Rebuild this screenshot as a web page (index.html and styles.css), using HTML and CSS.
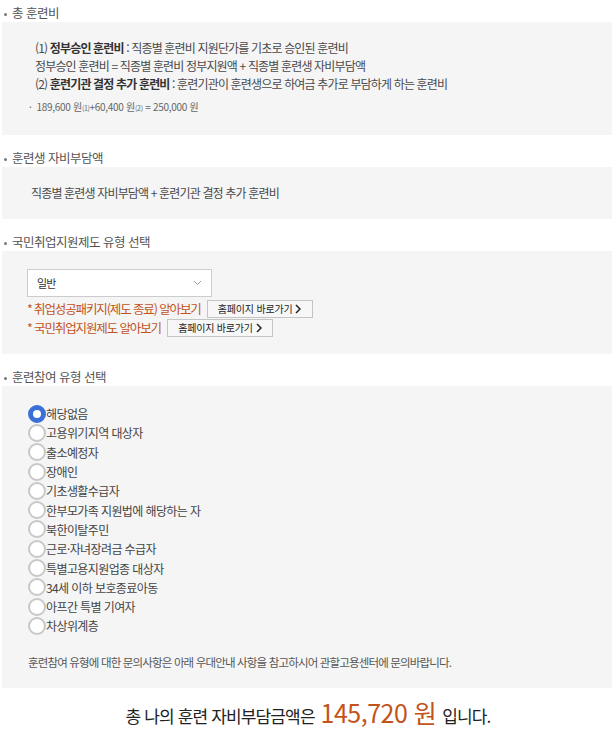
FILE: index.html
```html
<!DOCTYPE html>
<html lang="ko">
<head>
    <meta charset="UTF-8">
    <meta name="viewport" content="width=device-width, initial-scale=1.0">
    <title>훈련비 계산</title>
    <link rel="stylesheet" href="styles.css">
</head>
<body>
    <div class="section">
        <div class="sec-title">총 훈련비</div>
        <div class="box box-total">
            <p>(1) <b>정부승인 훈련비</b> : 직종별 훈련비 지원단가를 기초로 승인된 훈련비</p>
            <p>정부승인 훈련비 = 직종별 훈련비 정부지원액 + 직종별 훈련생 자비부담액</p>
            <p>(2) <b>훈련기관 결정 추가 훈련비</b> : 훈련기관이 훈련생으로 하여금 추가로 부담하게 하는 훈련비</p>
            <p class="calc">·&nbsp; 189,600 원<small>(1)</small>+60,400 원<small>(2)</small> = 250,000 원</p>
        </div>
    </div>

    <div class="section">
        <div class="sec-title">훈련생 자비부담액</div>
        <div class="box box-self">
            <p>직종별 훈련생 자비부담액 + 훈련기관 결정 추가 훈련비</p>
        </div>
    </div>

    <div class="section">
        <div class="sec-title">국민취업지원제도 유형 선택</div>
        <div class="box box-type">
            <div class="select">
                <span>일반</span>
                <svg width="9" height="6" viewBox="0 0 9 6"><path d="M1 1l3.5 3.5L8 1" fill="none" stroke="#999" stroke-width="1"/></svg>
            </div>
            <div class="link-row first">
                <span class="red">* 취업성공패키지(제도 종료) 알아보기</span>
                <button class="go-btn">홈페이지 바로가기 <svg width="6" height="10" viewBox="0 0 6 10"><path d="M1 1l4 4L1 9" fill="none" stroke="#222" stroke-width="1.5"/></svg></button>
            </div>
            <div class="link-row">
                <span class="red">* 국민취업지원제도 알아보기</span>
                <button class="go-btn">홈페이지 바로가기 <svg width="6" height="10" viewBox="0 0 6 10"><path d="M1 1l4 4L1 9" fill="none" stroke="#222" stroke-width="1.5"/></svg></button>
            </div>
        </div>
    </div>

    <div class="section section-last">
        <div class="sec-title">훈련참여 유형 선택</div>
        <div class="box box-radio">
            <ul class="radio-list">
                <li><label><input type="radio" name="ptype" checked>해당없음</label></li>
                <li><label><input type="radio" name="ptype">고용위기지역 대상자</label></li>
                <li><label><input type="radio" name="ptype">출소예정자</label></li>
                <li><label><input type="radio" name="ptype">장애인</label></li>
                <li><label><input type="radio" name="ptype">기초생활수급자</label></li>
                <li><label><input type="radio" name="ptype">한부모가족 지원법에 해당하는 자</label></li>
                <li><label><input type="radio" name="ptype">북한이탈주민</label></li>
                <li><label><input type="radio" name="ptype">근로·자녀장려금 수급자</label></li>
                <li><label><input type="radio" name="ptype">특별고용지원업종 대상자</label></li>
                <li><label><input type="radio" name="ptype">34세 이하 보호종료아동</label></li>
                <li><label><input type="radio" name="ptype">아프간 특별 기여자</label></li>
                <li><label><input type="radio" name="ptype">차상위계층</label></li>
            </ul>
            <p class="note">훈련참여 유형에 대한 문의사항은 아래 우대안내 사항을 참고하시어 관할고용센터에 문의바랍니다.</p>
        </div>
    </div>

    <div class="result">총 나의 훈련 자비부담금액은 <strong>145,720 원</strong> 입니다.</div>
</body>
</html>
```

FILE: styles.css
```css
body {
    margin: 0;
    padding: 0;
    background: #fff;
    color: #4a4a4a;
    font-family: "Noto Sans CJK KR", "Noto Sans", sans-serif;
    font-size: 12px;
    letter-spacing: -0.07em;
}

p {
    margin: 0;
}

.section {
    margin-bottom: 14px;
}

.section-last {
    margin-bottom: 0;
}

.sec-title {
    position: relative;
    height: 18px;
    line-height: 18px;
    margin-top: 4px;
    padding-left: 12px;
    font-size: 12.5px;
    letter-spacing: -0.04em;
    color: #555;
}

.sec-title::before {
    content: "";
    position: absolute;
    left: 4px;
    top: 9px;
    width: 3px;
    height: 3px;
    border-radius: 50%;
    background: #777;
}

.box {
    margin: 0 4px 0 2px;
    background: #f5f5f5;
}

.box-total {
    padding: 17px 28px 19px 33px;
}

.box-total p {
    line-height: 18px;
}

.box-total b {
    color: #333;
}

.box-total .calc {
    margin: 6px 0 0 -6px;
    line-height: 16px;
    font-size: 10px;
    letter-spacing: -0.03em;
    color: #666;
}

.box-total .calc small {
    font-size: 7px;
}

.box-self {
    padding: 17px 28px 17px 29px;
    line-height: 18px;
}

.box-type {
    padding: 18px 25px 17px;
}

.select {
    display: flex;
    align-items: center;
    justify-content: space-between;
    box-sizing: border-box;
    width: 185px;
    height: 28px;
    padding: 0 9px;
    background: #fff;
    border: 1px solid #ccc;
    color: #333;
    font-size: 11px;
}

.link-row {
    display: flex;
    align-items: center;
    gap: 6px;
    height: 19px;
}

.link-row.first {
    margin-top: 2px;
}

.red {
    color: #c2541b;
    font-size: 12.5px;
    letter-spacing: -0.09em;
}

.go-btn {
    display: flex;
    align-items: center;
    justify-content: center;
    gap: 3px;
    width: 106px;
    height: 18px;
    padding: 0;
    background: #f7f7f7;
    border: 1px solid #c4c4c4;
    font-family: inherit;
    font-size: 10px;
    letter-spacing: -0.02em;
    color: #222;
    font-weight: normal;
}

.box-radio {
    padding: 18px 26px 18px;
}

.radio-list {
    list-style: none;
    margin: 0;
    padding: 0;
}

.radio-list label {
    display: flex;
    align-items: center;
    height: 19.3px;
    color: #444;
    letter-spacing: -0.05em;
}

.radio-list input {
    appearance: none;
    -webkit-appearance: none;
    box-sizing: border-box;
    width: 18px;
    height: 18px;
    margin: 0;
    border: 2px solid #c8c8c8;
    border-radius: 50%;
    background: #fff;
}

.radio-list input:checked {
    border: 5px solid #3a6fd8;
}

.note {
    margin-top: 18px;
    line-height: 16px;
    font-size: 11.5px;
    color: #555;
}

.result {
    text-align: center;
    font-size: 17px;
    letter-spacing: -0.05em;
    color: #222;
    line-height: 48px;
}

.result strong {
    font-weight: normal;
    font-size: 25px;
    letter-spacing: -0.02em;
    color: #c2541b;
    margin: 0 2px;
}
```
